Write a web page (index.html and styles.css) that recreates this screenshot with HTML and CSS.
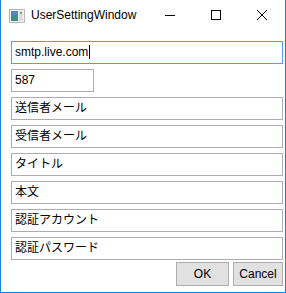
FILE: index.html
```html
<!DOCTYPE html>
<html lang="ja">
<head>
    <meta charset="utf-8">
    <title>UserSettingWindow</title>
    <link rel="stylesheet" href="styles.css">
</head>
<body>
    <div class="window">
        <div class="title-bar">
            <svg class="app-icon" width="16" height="14" viewBox="0 0 16 14">
                <rect x="0.5" y="0.5" width="15" height="13" fill="#f4f4f4" stroke="#b8b8b8"/>
                <rect x="2" y="2" width="7" height="10" fill="#3f8f86"/>
                <rect x="2" y="2" width="7" height="4" fill="#5a86c8"/>
                <rect x="10" y="2" width="4" height="10" fill="#dcdcdc"/>
                <rect x="11" y="3" width="2" height="2" fill="#7fb07a"/>
            </svg>
            <span class="title">UserSettingWindow</span>
            <div class="caption-buttons">
                <div class="caption-btn">
                    <svg width="10" height="10" viewBox="0 0 10 10"><path d="M0 5.5H10" stroke="#000" stroke-width="1"/></svg>
                </div>
                <div class="caption-btn">
                    <svg width="10" height="10" viewBox="0 0 10 10"><rect x="0.5" y="0.5" width="9" height="9" fill="none" stroke="#000"/></svg>
                </div>
                <div class="caption-btn">
                    <svg width="10" height="10" viewBox="0 0 10 10"><path d="M0 0L10 10M10 0L0 10" stroke="#000" stroke-width="1"/></svg>
                </div>
            </div>
        </div>

        <div class="content">
            <div class="field focused">smtp.live.com<span class="caret"></span></div>
            <div class="field short">587</div>
            <div class="field">送信者メール</div>
            <div class="field">受信者メール</div>
            <div class="field">タイトル</div>
            <div class="field">本文</div>
            <div class="field">認証アカウント</div>
            <div class="field">認証パスワード</div>

            <div class="actions">
                <button class="btn ok">OK</button>
                <button class="btn cancel">Cancel</button>
            </div>
        </div>
    </div>
</body>
</html>
```

FILE: styles.css
```css
body {
    margin: 0;
    background: #ffffff;
}

.window {
    box-sizing: border-box;
    width: 286px;
    height: 293px;
    border: 1px solid #1883d7;
    border-top: none;
    background: #ffffff;
    font-family: "Liberation Sans", "Noto Sans CJK JP", sans-serif;
    font-size: 12px;
    color: #000;
}

.title-bar {
    display: flex;
    align-items: center;
    height: 30px;
}

.app-icon {
    margin-left: 8px;
    margin-right: 6px;
    margin-top: 1px;
}

.title {
    font-size: 12px;
    color: #000;
}

.caption-buttons {
    display: flex;
    margin-left: auto;
    height: 30px;
}

.caption-btn {
    width: 46px;
    height: 30px;
    display: flex;
    align-items: center;
    justify-content: center;
}

.content {
    display: flex;
    flex-direction: column;
    gap: 5px;
    padding: 11px 2px 0 10px;
}

.field {
    box-sizing: border-box;
    height: 23px;
    border: 1px solid #abadb3;
    padding: 0 3px;
    line-height: 20px;
    white-space: nowrap;
}

.field.focused {
    border-color: #569de5;
}

.field.short {
    width: 83px;
}

.caret {
    display: inline-block;
    width: 1px;
    height: 14px;
    margin-left: 1px;
    background: #000;
    vertical-align: -3px;
}

.actions {
    display: flex;
    justify-content: flex-end;
    gap: 4px;
    margin-top: -3px;
}

.btn {
    box-sizing: border-box;
    height: 24px;
    border: 1px solid #adadad;
    background: #e1e1e1;
    font-family: "Liberation Sans", sans-serif;
    font-size: 12px;
    color: #000;
    padding: 0;
}

.btn.ok {
    width: 53px;
}

.btn.cancel {
    width: 50px;
}
```
